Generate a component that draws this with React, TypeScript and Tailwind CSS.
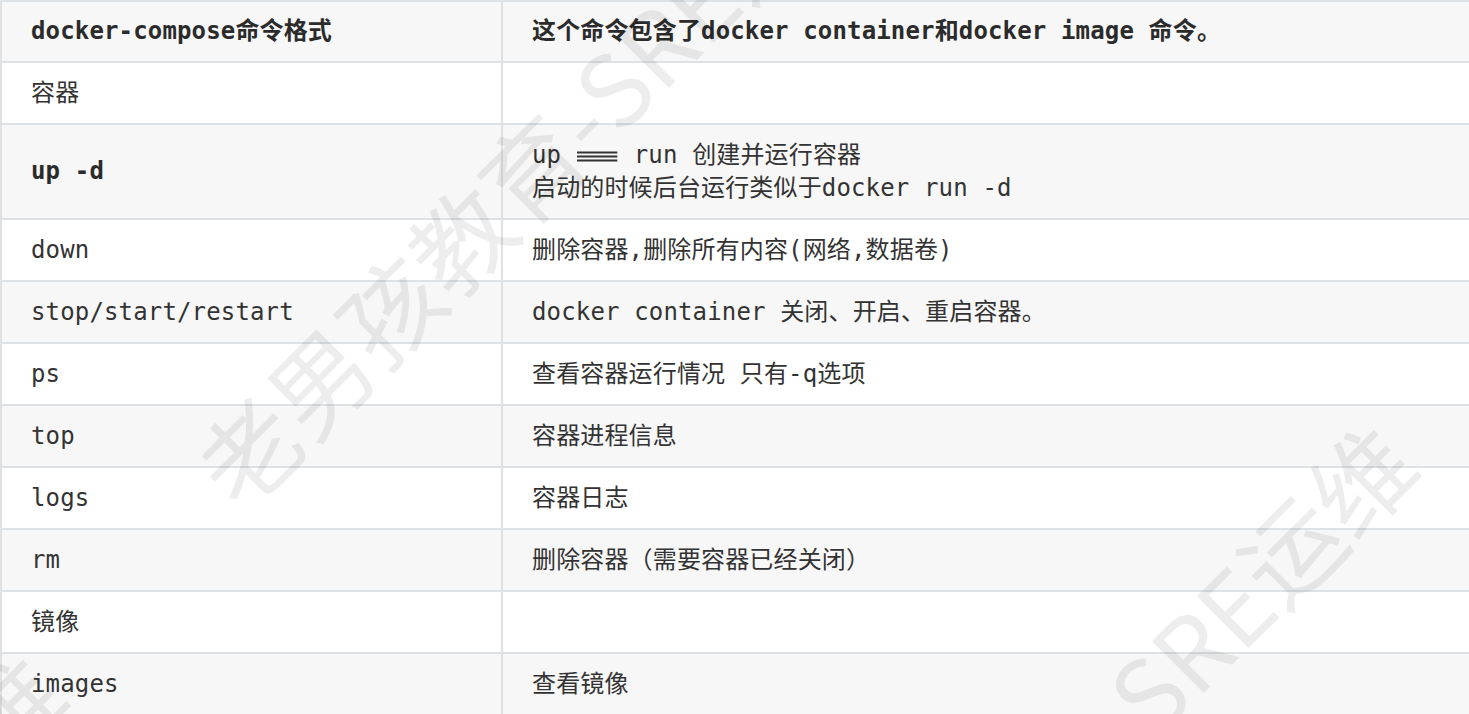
import React from "react";

type Row = {
  cmd: string;
  desc: React.ReactNode;
  bold?: boolean;
};

const mono = "font-['DejaVu_Sans_Mono','Noto_Sans_CJK_SC',monospace]";

// three-bar ligature that the original font draws for "==="
function TripleEq() {
  return (
    <span className="relative inline-block w-[3ch] text-transparent">
      ===
      <svg
        className="absolute left-0 top-0 h-[33px] w-full"
        viewBox="0 0 43 33"
        preserveAspectRatio="none"
        aria-hidden
      >
        <g stroke="#333" strokeWidth="2">
          <line x1="1" y1="13.5" x2="41" y2="13.5" />
          <line x1="1" y1="17.5" x2="41" y2="17.5" />
          <line x1="1" y1="21.5" x2="41" y2="21.5" />
        </g>
      </svg>
    </span>
  );
}

const rows: Row[] = [
  { cmd: "容器", desc: "" },
  {
    cmd: "up -d",
    bold: true,
    desc: (
      <>
        up <TripleEq /> run 创建并运行容器
        <br />
        启动的时候后台运行类似于docker run -d
      </>
    ),
  },
  { cmd: "down", desc: "删除容器,删除所有内容(网络,数据卷)" },
  { cmd: "stop/start/restart", desc: "docker container 关闭、开启、重启容器。" },
  { cmd: "ps", desc: "查看容器运行情况 只有-q选项" },
  { cmd: "top", desc: "容器进程信息" },
  { cmd: "logs", desc: "容器日志" },
  { cmd: "rm", desc: "删除容器（需要容器已经关闭）" },
  { cmd: "镜像", desc: "" },
  { cmd: "images", desc: "查看镜像" },
];

const watermarks = [
  "left-[211px] top-[435px]",
  "left-[746px] top-[1040px]",
  "left-[-605px] top-[1270px]",
];

export default function App() {
  return (
    <div className="relative h-[714px] w-[1469px] overflow-hidden bg-white">
      <div
        className={`w-[1500px] border-l-2 border-t-2 border-[#dfe2e5] text-[24px] leading-[33px] tracking-[0.15px] text-[#333] whitespace-pre ${mono}`}
      >
        <div className="grid grid-cols-[501px_1fr] border-b-2 border-[#dfe2e5] bg-[#f7f7f7] font-bold text-[#2b2b2b]">
          <div className="border-r-2 border-[#dfe2e5] py-[13px] pl-[29px]">
            docker-compose命令格式
          </div>
          <div className="py-[13px] pl-[29px]">
            这个命令包含了docker container和docker image 命令。
          </div>
        </div>
        {rows.map((row, i) => (
          <div
            key={"row-" + i}
            className={`grid grid-cols-[501px_1fr] border-b-2 border-[#dfe2e5] ${
              i % 2 === 1 ? "bg-[#f7f7f7]" : "bg-white"
            }`}
          >
            <div
              className={`flex items-center border-r-2 border-[#dfe2e5] py-[13.5px] pl-[29px] ${
                row.bold ? "font-bold text-[#2b2b2b]" : ""
              }`}
            >
              {row.cmd}
            </div>
            <div className="min-h-[60px] py-[13.5px] pl-[29px]">{row.desc}</div>
          </div>
        ))}
      </div>

      {watermarks.map((pos) => (
        <span
          key={pos}
          className={`pointer-events-none absolute ${pos} origin-left -rotate-45 whitespace-nowrap font-['Noto_Sans_CJK_SC','Noto_Sans',sans-serif] text-[100px] leading-[100px] text-black/[0.07] select-none`}
        >
          老男孩教育-SRE运维
        </span>
      ))}
    </div>
  );
}
